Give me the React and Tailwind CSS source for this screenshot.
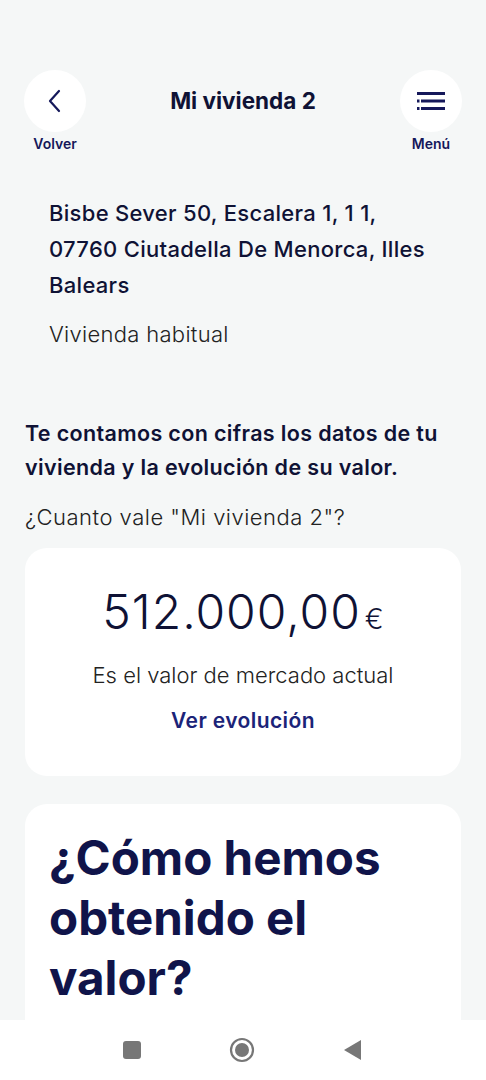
import React from "react";

export default function App() {
  return (
    <div
      className="relative h-[1080px] w-[486px] overflow-hidden bg-[#f5f7f7] text-[#0f1235]"
      style={{ fontFamily: "Inter, 'Open Sans', sans-serif" }}
    >
      {/* status bar */}
      <div className="h-[40px]" />

      {/* header */}
      <div className="mt-[30px] flex items-start justify-between px-[24px]">
        <div className="flex w-[62px] flex-col items-center">
          <div className="flex h-[62px] w-[62px] items-center justify-center rounded-full bg-white">
            <svg width="22" height="26" viewBox="0 0 22 26" fill="none">
              <path d="M15 3 L6 13 L15 23" stroke="#15185a" strokeWidth="2.2" strokeLinecap="round" strokeLinejoin="round" />
            </svg>
          </div>
          <span className="mt-[3px] text-[14px] font-semibold leading-[18px] text-[#15185a]">Volver</span>
        </div>
        <div className="flex h-[62px] flex-1 items-center justify-center">
          <h1 className="text-[22.5px] font-bold">Mi vivienda 2</h1>
        </div>
        <div className="flex w-[62px] flex-col items-center">
          <div className="flex h-[62px] w-[62px] items-center justify-center rounded-full bg-white">
            <svg width="30" height="18" viewBox="0 0 30 18" fill="none">
              <rect x="1" y="0" width="28" height="3" fill="#15185a" />
              <rect x="1" y="7.5" width="2.5" height="3" fill="#15185a" />
              <rect x="5" y="7.5" width="24" height="3" fill="#15185a" />
              <rect x="1" y="15" width="2.5" height="3" fill="#15185a" />
              <rect x="5" y="15" width="24" height="3" fill="#15185a" />
            </svg>
          </div>
          <span className="mt-[3px] text-[14px] font-semibold leading-[18px] text-[#15185a]">Menú</span>
        </div>
      </div>

      {/* address */}
      <div className="mt-[42px] pl-[49px] pr-[20px]">
        <p className="text-[22px] font-medium leading-[36px] tracking-[0.3px]">
          Bisbe Sever 50, Escalera 1, 1 1,
          <br />
          07760 Ciutadella De Menorca, Illes
          <br />
          Balears
        </p>
        <p className="mt-[13px] text-[22px] font-light leading-[36px] tracking-[0.3px] text-[#222]">Vivienda habitual</p>
      </div>

      {/* intro */}
      <div className="mt-[64px] pl-[25px] pr-[20px]">
        <p className="text-[21.5px] font-semibold leading-[34px] tracking-[0.35px]">
          Te contamos con cifras los datos de tu vivienda y la evolución de su valor.
        </p>
        <p className="mt-[16px] text-[22px] font-light leading-[34px] tracking-[0.5px] text-[#222]">¿Cuanto vale "Mi vivienda 2"?</p>
      </div>

      {/* value card */}
      <div className="mx-[25px] mt-[14px] flex h-[228px] flex-col items-center rounded-[22px] bg-white">
        <div className="mt-[32px] flex items-baseline">
          <span className="text-[48px] font-light leading-[64px] tracking-[1px]">512.000,00</span>
          <span className="ml-[4px] text-[28px] font-light">€</span>
        </div>
        <p className="mt-[16px] text-[22px] font-light leading-[30px] text-[#222]">Es el valor de mercado actual</p>
        <p className="mt-[16px] text-[21px] font-semibold leading-[30px] tracking-[0.4px] text-[#1b2378]">Ver evolución</p>
      </div>

      {/* how card */}
      <div className="mx-[25px] mt-[28px] h-[400px] rounded-[22px] bg-white px-[24px] pt-[24px]">
        <h2 className="text-[47.5px] font-bold leading-[60px] text-[#10144a]">
          ¿Cómo hemos obtenido el valor?
        </h2>
      </div>

      {/* android nav bar */}
      <div className="absolute bottom-0 left-0 flex h-[60px] w-full items-center justify-center bg-white">
        <div className="flex w-[240px] items-center justify-between">
          <div className="h-[18px] w-[18px] rounded-[3px] bg-[#777]" />
          <svg width="26" height="26" viewBox="0 0 26 26">
            <circle cx="13" cy="13" r="11" fill="none" stroke="#777" strokeWidth="2.2" />
            <circle cx="13" cy="13" r="7" fill="#777" />
          </svg>
          <svg width="20" height="22" viewBox="0 0 20 22">
            <path d="M18 1 L18 21 L1 11 Z" fill="#777" />
          </svg>
        </div>
      </div>
    </div>
  );
}
